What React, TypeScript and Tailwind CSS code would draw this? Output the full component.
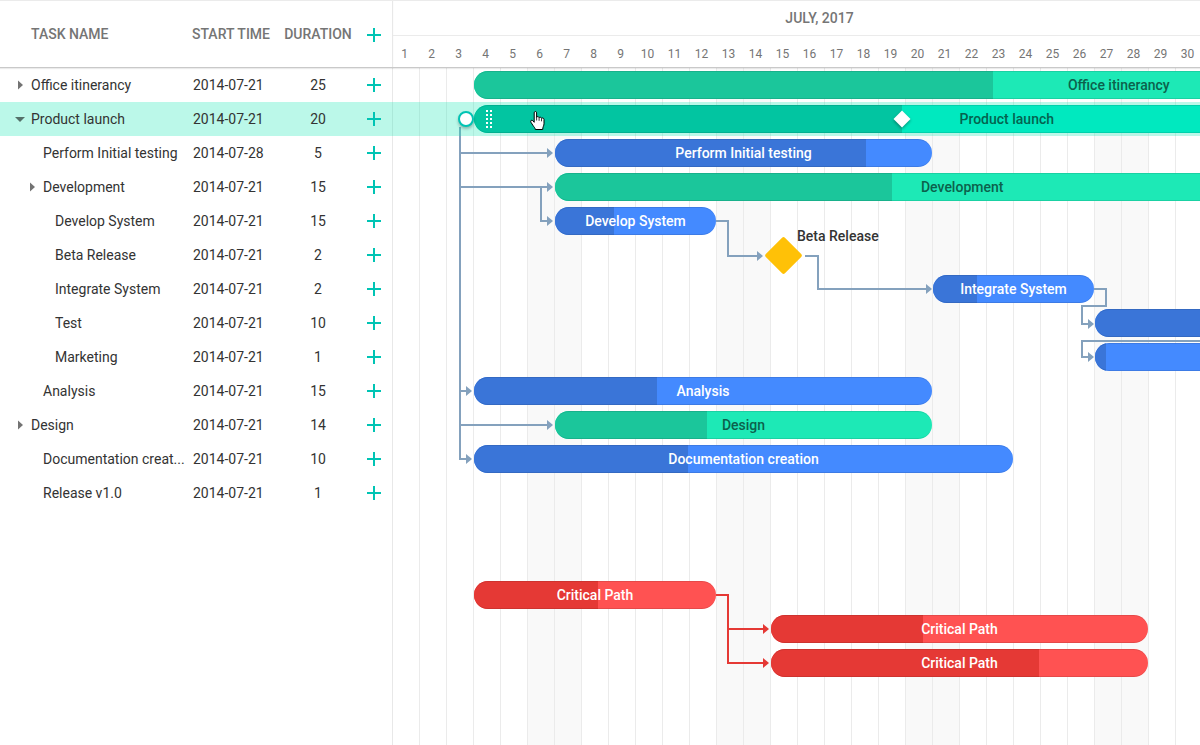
import React from "react";

const DAY = 27;

type Task = {
  name: string;
  start: string;
  duration: number;
  level: number;
  toggle?: "open" | "closed";
  active?: boolean;
};

const tasks: Task[] = [
  { name: "Office itinerancy", start: "2014-07-21", duration: 25, level: 0, toggle: "closed" },
  { name: "Product launch", start: "2014-07-21", duration: 20, level: 0, toggle: "open", active: true },
  { name: "Perform Initial testing", start: "2014-07-28", duration: 5, level: 1 },
  { name: "Development", start: "2014-07-21", duration: 15, level: 1, toggle: "closed" },
  { name: "Develop System", start: "2014-07-21", duration: 15, level: 2 },
  { name: "Beta Release", start: "2014-07-21", duration: 2, level: 2 },
  { name: "Integrate System", start: "2014-07-21", duration: 2, level: 2 },
  { name: "Test", start: "2014-07-21", duration: 10, level: 2 },
  { name: "Marketing", start: "2014-07-21", duration: 1, level: 2 },
  { name: "Analysis", start: "2014-07-21", duration: 15, level: 1 },
  { name: "Design", start: "2014-07-21", duration: 14, level: 0, toggle: "closed" },
  { name: "Documentation creat...", start: "2014-07-21", duration: 10, level: 1 },
  { name: "Release v1.0", start: "2014-07-21", duration: 1, level: 1 },
];

type Tone = "green" | "active" | "blue" | "red";
type Bar = { label: string; tone: Tone; from: number; span: number; done: number; hideLabel?: boolean };
type Row = { bar?: Bar; milestone?: string };

// Positions and lengths are measured in days from the left edge of the month.
const rows: Row[] = [
  { bar: { label: "Office itinerancy", tone: "green", from: 3, span: 47.8, done: 19.22 } },
  { bar: { label: "Product launch", tone: "active", from: 3, span: 39.5, done: 15.85 } },
  { bar: { label: "Perform Initial testing", tone: "blue", from: 6, span: 14, done: 11.52 } },
  { bar: { label: "Development", tone: "green", from: 6, span: 30.2, done: 12.48 } },
  { bar: { label: "Develop System", tone: "blue", from: 6, span: 6, done: 2.19 } },
  { milestone: "Beta Release" },
  { bar: { label: "Integrate System", tone: "blue", from: 20, span: 6, done: 1.63 } },
  { bar: { label: "Test", tone: "blue", from: 26, span: 12, done: 12, hideLabel: true } },
  { bar: { label: "Marketing", tone: "blue", from: 26, span: 12, done: 0.41, hideLabel: true } },
  { bar: { label: "Analysis", tone: "blue", from: 3, span: 17, done: 6.78 } },
  { bar: { label: "Design", tone: "green", from: 6, span: 14, done: 5.63 } },
  { bar: { label: "Documentation creation", tone: "blue", from: 3, span: 20, done: 7.93 } },
  {},
  {},
  {},
  { bar: { label: "Critical Path", tone: "red", from: 3, span: 9, done: 4.59 } },
  { bar: { label: "Critical Path", tone: "red", from: 14, span: 14, done: 5.63 } },
  { bar: { label: "Critical Path", tone: "red", from: 14, span: 14, done: 9.93 } },
];

const tones: Record<Tone, { bar: string; done: string }> = {
  green: { bar: "bg-[#1de9b6] text-[#0c614c]", done: "bg-[#1bc69b]" },
  active: { bar: "bg-[#00e9bf] text-[#04634f]", done: "bg-[#02c5a1]" },
  blue: { bar: "bg-[#448aff] text-white", done: "bg-[#3a75d8]" },
  red: { bar: "bg-[#ff5252] text-white", done: "bg-[#e53935]" },
};

const days = Array.from({ length: 30 }, (_, i) => i + 1);
const isWeekend = (day: number) => day % 7 === 6 || day % 7 === 0;

function AddButton({ label }: { label: string }) {
  return (
    <button type="button" aria-label={label} className="block">
      <svg viewBox="0 0 14 14" className="block size-3.5 fill-[#00c4b4]" shapeRendering="crispEdges">
        <path d="M6 0h2v6h6v2H8v6H6V8H0V6h6z" />
      </svg>
    </button>
  );
}

function Toggle({ state }: { state: "open" | "closed" }) {
  return (
    <button type="button" aria-label={state === "open" ? "Collapse" : "Expand"} className="w-3 shrink-0">
      <svg viewBox="0 0 12 12" className="block size-3 fill-black/55">
        {state === "open" ? <path d="M1 4h10L6 9z" /> : <path d="M4 1.5v9L9 6z" />}
      </svg>
    </button>
  );
}

function TaskTable() {
  return (
    <section className="w-[393px] shrink-0 bg-[linear-gradient(#e8e8e8,#e8e8e8)] bg-[length:1px_100%] bg-right bg-no-repeat">
      <table className="w-full table-fixed border-separate border-spacing-0">
        <colgroup>
          <col />
          <col className="w-[94px]" />
          <col className="w-[76px]" />
          <col className="w-[37px]" />
        </colgroup>
        <thead className="text-left text-[#757575] shadow-[0_1px_1px_rgba(0,0,0,0.08)] [&_th]:border-t [&_th]:border-b [&_th]:border-t-[#ebebeb] [&_th]:border-b-[#c9c9c9] [&_th]:font-medium">
          <tr className="h-[68px]">
            <th scope="col" className="pl-[31px]">TASK NAME</th>
            <th scope="col" className="pl-1.5">START TIME</th>
            <th scope="col" className="text-center">DURATION</th>
            <th scope="col" className="pt-0.5 pl-[11px]">
              <AddButton label="Add task" />
            </th>
          </tr>
        </thead>
        <tbody className="text-[#333]">
          {tasks.map((task) => (
            <tr key={task.name} className={task.active ? "h-[34px] bg-[#1de9b6]/30" : "h-[34px]"}>
              <td>
                <div className="flex items-center gap-[5px]" style={{ paddingLeft: 14 + task.level * 12 }}>
                  {task.toggle ? <Toggle state={task.toggle} /> : <span className="w-3 shrink-0" />}
                  <span className="whitespace-nowrap">{task.name}</span>
                </div>
              </td>
              <td className="pl-[7px]">{task.start}</td>
              <td className="text-center">{task.duration}</td>
              <td className="pl-[11px]">
                <AddButton label={`Add subtask to ${task.name}`} />
              </td>
            </tr>
          ))}
        </tbody>
      </table>
    </section>
  );
}

function Grip() {
  return (
    <svg viewBox="0 0 6 18" className="absolute left-3 top-[5px] h-[18px] w-1.5 fill-white" shapeRendering="crispEdges">
      {[0, 4, 8, 12, 16].map((y) => (
        <path key={y} d={`M0 ${y}h2v2H0zM4 ${y}h2v2H4z`} />
      ))}
    </svg>
  );
}

function HandCursor() {
  return (
    <svg viewBox="0 0 16 20" className="absolute left-14 top-1.5 h-5 w-4">
      <path
        d="M4.2 1.8c0-1.7 2.4-1.7 2.4 0v4.4c.3-.9 2.3-.8 2.5.5.6-.8 2.2-.6 2.4.6.8-.7 2.5-.3 2.5 1.2v4.3c0 2-1.3 3-1.3 5.700H5.300c0-1.600-1.300-2.300-2.200-3.900L.9 11.200C.1 9.700 1.600 8.600 2.800 9.700l1.400 1.600z"
        className="fill-white stroke-black"
        strokeWidth="1"
        strokeLinejoin="round"
      />
      <path d="M6.600 6v3.500M9.100 7v2.800M11.500 7.500v2.800" className="fill-none stroke-black" strokeWidth="0.800" />
    </svg>
  );
}

function TaskBar({ bar }: { bar: Bar }) {
  const tone = tones[bar.tone];
  return (
    <div className="relative h-7 shrink-0" style={{ marginLeft: bar.from * DAY, width: bar.span * DAY - 1 }}>
      <div
        className={`relative flex h-7 items-center justify-center overflow-hidden rounded-full font-medium ${tone.bar}`}
        aria-label={bar.label}
      >
        <div className={`absolute inset-y-0 left-0 ${tone.done}`} style={{ width: bar.done * DAY }} />
        <div className="absolute inset-0 rounded-full border-y border-black/10" />
        {!bar.hideLabel && <span className="relative whitespace-nowrap">{bar.label}</span>}
      </div>
      {bar.tone === "active" && (
        <>
          <span className="absolute -left-4 top-1.5 size-4 rounded-full border-2 border-[#00c4b4] bg-white shadow-[0_2px_3px_rgba(0,0,0,0.25)]" />
          <Grip />
          <HandCursor />
          <span
            className="absolute top-2 size-3 -translate-x-1/2 rotate-45 bg-white shadow-[1px_1px_3px_rgba(0,0,0,0.35)]"
            style={{ left: bar.done * DAY }}
          />
        </>
      )}
    </div>
  );
}

function Milestone({ label }: { label: string }) {
  return (
    <div className="relative ml-[377px] size-7">
      <div className="mt-px size-[27px] rotate-45 rounded-xs bg-[#ffc107]" />
      <span className="absolute -top-[15px] left-[27px] whitespace-nowrap font-medium text-[#333]">{label}</span>
    </div>
  );
}

type Link = { d: string; arrows: [number, number][] };

const links: Link[] = [
  {
    d: "M67 59V391H73M67 85H154M67 119H154M148 119V153H154M67 323H73M67 357H154",
    arrows: [[160, 85], [160, 119], [160, 153], [79, 323], [160, 357], [79, 391]],
  },
  { d: "M323 153H335V188H364", arrows: [[370, 188]] },
  { d: "M412 188H425V221H533", arrows: [[539, 221]] },
  { d: "M701 221H713V238H689V256H695", arrows: [[701, 256]] },
  { d: "M837 273H689V289H695", arrows: [[701, 289]] },
];

const criticalLinks: Link[] = [
  { d: "M323 527H335V595H370M335 561H370", arrows: [[376, 561], [376, 595]] },
];

function LinkPath({ link, className }: { link: Link; className: string }) {
  return (
    <g className={className}>
      <path d={link.d} fill="none" strokeWidth="2" />
      {link.arrows.map(([x, y]) => (
        <path key={`${x}-${y}`} d={`M${x} ${y}l-6 -5v10z`} stroke="none" />
      ))}
    </g>
  );
}

function Chart() {
  return (
    <section className="flex min-w-0 flex-1 flex-col overflow-hidden">
      <header className="relative z-10 flex h-[68px] flex-col border-t border-b border-t-[#ebebeb] border-b-[#c9c9c9] text-[#757575] shadow-[0_1px_1px_rgba(0,0,0,0.08)]">
        <div className="flex h-[35px] items-center justify-center border-b border-[#ebebeb] pl-[46px] font-medium">
          JULY, 2017
        </div>
        <div className="flex flex-1 items-center pt-1 text-xs">
          {days.map((day) => (
            <div key={day} className="w-[27px] shrink-0 pr-1 text-center">
              {day}
            </div>
          ))}
        </div>
      </header>
      <div className="grid flex-1 grid-cols-[837px]">
        <div className="col-start-1 row-start-1 flex">
          {days.map((day) => (
            <div
              key={day}
              className={`w-[27px] shrink-0 border-r border-[#ebebeb] ${isWeekend(day) ? "bg-[#f9f9f9]" : ""}`}
            />
          ))}
        </div>
        <div className="z-0 col-start-1 row-start-1">
          {rows.map((row, i) => (
            <div
              key={i}
              className={`flex h-[34px] items-center ${row.bar?.tone === "active" ? "bg-[#1de9b6]/30" : ""}`}
            >
              {row.bar && <TaskBar bar={row.bar} />}
              {row.milestone && <Milestone label={row.milestone} />}
            </div>
          ))}
        </div>
        <svg viewBox="0 0 837 612" className="col-start-1 row-start-1 h-[612px] w-[837px]">
          {links.map((link) => (
            <LinkPath key={link.d} link={link} className="fill-[#84a1bd] stroke-[#84a1bd]" />
          ))}
          {criticalLinks.map((link) => (
            <LinkPath key={link.d} link={link} className="fill-[#e53935] stroke-[#e53935]" />
          ))}
        </svg>
      </div>
    </section>
  );
}

export default function App() {
  return (
    <main className="flex min-h-screen bg-white font-[Roboto,sans-serif] text-sm">
      <TaskTable />
      <Chart />
    </main>
  );
}
